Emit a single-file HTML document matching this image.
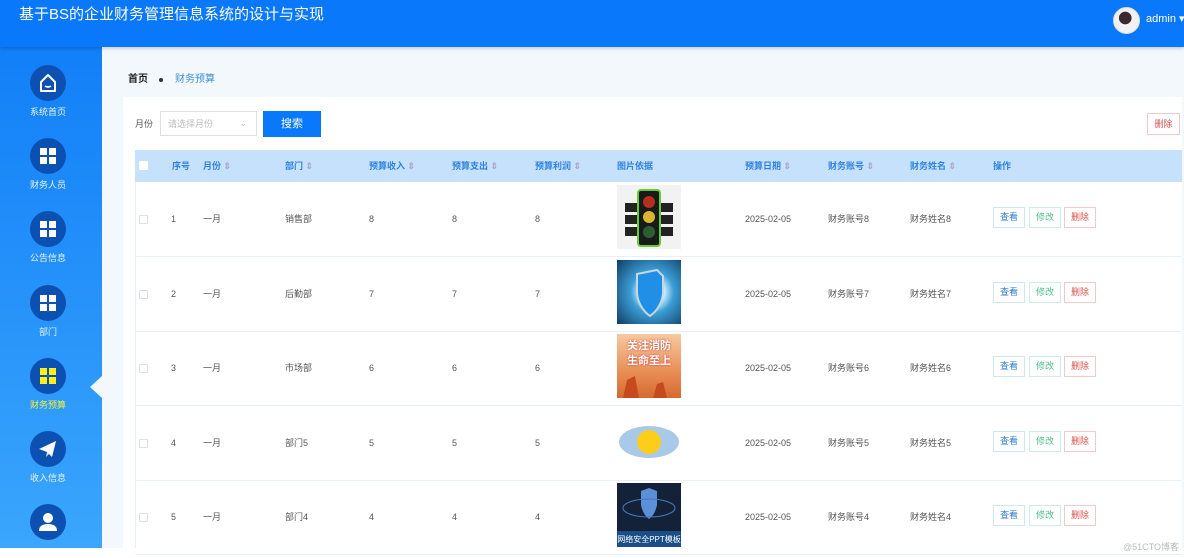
<!DOCTYPE html>
<html><head><meta charset="utf-8">
<style>
*{margin:0;padding:0;box-sizing:border-box}
body{width:1184px;height:558px;overflow:hidden;background:#fff;font-family:"Liberation Sans","Noto Sans CJK SC",sans-serif;position:relative}
.abs{position:absolute}
.hdr{left:0;top:0;width:1184px;height:47px;background:#0a78fb;box-shadow:0 2px 3px rgba(0,0,0,.15);z-index:2}
.title{left:19px;top:5px;color:#fff;font-size:15px;line-height:20px}
.side{left:0;top:47px;width:102px;height:501px;background:linear-gradient(#127ff8,#3aa6fc)}
.main{left:102px;top:47px;width:1082px;height:501px;background:#f3f8fd}
.circ{position:absolute;left:30px;width:36px;height:36px;border-radius:50%;background:#0c50b2}
.grid{position:absolute;left:10px;top:10px;width:16px;height:16px}
.grid i{position:absolute;width:7px;height:7px;background:#fff}
.lbl{position:absolute;left:0;width:96px;text-align:center;color:#e6f1ff;font-size:9px;line-height:12px}
.panel{left:123px;top:97px;width:1059px;height:451px;background:#fff}
.th{top:150px;height:32px;left:135px;width:1047px;background:#c6e1fb}
.h{position:absolute;top:160px;font-size:9px;line-height:12px;color:#2e82e0;font-weight:bold;white-space:nowrap}
.c{position:absolute;font-size:9px;line-height:12px;color:#555;white-space:nowrap}
.row{position:absolute;left:135px;width:1047px;height:1px;background:#e8eff6}
.cb{position:absolute;left:139px;width:9px;height:9px;border:1px solid #dcdfe6;background:#fff;border-radius:1px}
.btn{position:absolute;height:21px;width:32px;border:1px solid;font-size:9px;text-align:center;line-height:19px;background:#fff}
.img{position:absolute;left:617px;width:64px;height:64px;overflow:hidden}
</style></head><body>
<div class="abs hdr"></div>
<div class="abs title" style="z-index:3">基于BS的企业财务管理信息系统的设计与实现</div>
<div class="abs" style="z-index:3;left:1113px;top:7px;width:27px;height:27px;border-radius:50%;background:radial-gradient(circle at 45% 40%,#3a2a30 0 30%,#f2f0f0 32%);border:1px solid #ddd"></div>
<div class="abs" style="z-index:3;left:1146px;top:13px;color:#fff;font-size:11px;line-height:13px;white-space:nowrap">admin ▾</div>
<div class="abs side"></div>
<div class="abs main"></div>
<div class="abs" style="left:90px;top:376px;width:0;height:0;border-top:11px solid transparent;border-bottom:11px solid transparent;border-right:12px solid #f3f8fd"></div>

<div class="circ" style="top:65px"><svg width="36" height="36" viewBox="0 0 36 36"><path d="M11 17 L18 10 L25 17 V26 H11 Z" fill="none" stroke="#fff" stroke-width="2" stroke-linejoin="round"/><path d="M15 21 Q18 23 21 21" fill="none" stroke="#fff" stroke-width="1.6"/></svg></div>
<div class="lbl" style="top:106px">系统首页</div>
<div class="circ" style="top:138px"><div class="grid"><i style="left:0;top:0"></i><i style="left:9px;top:0"></i><i style="left:0;top:9px"></i><i style="left:9px;top:9px"></i></div></div>
<div class="lbl" style="top:179px">财务人员</div>
<div class="circ" style="top:211px"><div class="grid"><i style="left:0;top:0"></i><i style="left:9px;top:0"></i><i style="left:0;top:9px"></i><i style="left:9px;top:9px"></i></div></div>
<div class="lbl" style="top:252px">公告信息</div>
<div class="circ" style="top:285px"><div class="grid"><i style="left:0;top:0"></i><i style="left:9px;top:0"></i><i style="left:0;top:9px"></i><i style="left:9px;top:9px"></i></div></div>
<div class="lbl" style="top:326px">部门</div>
<div class="circ" style="top:358px"><div class="grid"><i style="left:0;top:0;background:#ffef1a"></i><i style="left:9px;top:0;background:#ffef1a"></i><i style="left:0;top:9px;background:#ffef1a"></i><i style="left:9px;top:9px;background:#ffef1a"></i></div></div>
<div class="lbl" style="top:399px;color:#f3ef3a">财务预算</div>
<div class="circ" style="top:431px"><svg width="36" height="36" viewBox="0 0 36 36"><path d="M9 18 L26 10 L22 26 L17 21 Z" fill="#fff"/><path d="M17 21 L16 26 L19 23" fill="#dfe9ff"/></svg></div>
<div class="lbl" style="top:472px">收入信息</div>
<div class="circ" style="top:504px"><svg width="36" height="36" viewBox="0 0 36 36"><circle cx="18" cy="14" r="5" fill="#fff"/><path d="M9 27 Q9 20 18 20 Q27 20 27 27 Z" fill="#fff"/></svg></div>

<div class="abs" style="left:128px;top:73px;font-size:10px;line-height:13px;color:#222;font-weight:bold">首页</div>
<div class="abs" style="left:159px;top:78px;width:4px;height:4px;border-radius:50%;background:#333"></div>
<div class="abs" style="left:175px;top:73px;font-size:10px;line-height:13px;color:#3e8fd8">财务预算</div>

<div class="abs panel"></div>
<div class="abs" style="left:135px;top:118px;font-size:9px;line-height:12px;color:#555">月份</div>
<div class="abs" style="left:160px;top:111px;width:97px;height:25px;border:1px solid #dcdfe6;background:#fff;font-size:9px;line-height:12px;color:#bbb;padding:6px 0 0 7px">请选择月份<span style="position:absolute;right:9px;top:5px;color:#bbb">⌄</span></div>
<div class="abs" style="left:263px;top:111px;width:58px;height:26px;background:#0a78fb;color:#fff;font-size:11px;text-align:center;line-height:26px">搜索</div>
<div class="abs" style="left:1147px;top:113px;width:33px;height:22px;border:1px solid #f0c9c9;color:#d9534f;font-size:9px;text-align:center;line-height:20px;background:#fff">删除</div>

<div class="abs th"></div>
<div class="cb" style="top:161px;border-color:#fff"></div>
<div class="h" style="left:172px">序号</div>
<div class="h" style="left:203px">月份 <span style="color:#aac">⇕</span></div>
<div class="h" style="left:285px">部门 <span style="color:#aac">⇕</span></div>
<div class="h" style="left:369px">预算收入 <span style="color:#aac">⇕</span></div>
<div class="h" style="left:452px">预算支出 <span style="color:#aac">⇕</span></div>
<div class="h" style="left:535px">预算利润 <span style="color:#aac">⇕</span></div>
<div class="h" style="left:617px">图片依据</div>
<div class="h" style="left:745px">预算日期 <span style="color:#aac">⇕</span></div>
<div class="h" style="left:828px">财务账号 <span style="color:#aac">⇕</span></div>
<div class="h" style="left:910px">财务姓名 <span style="color:#aac">⇕</span></div>
<div class="h" style="left:993px">操作</div>
<div class="abs" style="left:135px;top:182px;width:1px;height:366px;background:#e8eff6"></div>

<div id="rows"></div>
<script>
var d=[["1","销售部","8"],["2","后勤部","7"],["3","市场部","6"],["4","部门5","5"],["5","部门4","4"]];
var imgs=[
'<svg width="64" height="64" style="background:#f2f2f2"><rect x="8" y="18" width="48" height="9" fill="#222"/><rect x="8" y="30" width="48" height="9" fill="#222"/><rect x="8" y="42" width="48" height="9" fill="#222"/><rect x="21" y="5" width="22" height="56" rx="3" fill="#1a1a1a" stroke="#6c3" stroke-width="2"/><circle cx="32" cy="17" r="6" fill="#b3301f"/><circle cx="32" cy="32" r="6" fill="#d9b830"/><circle cx="32" cy="47" r="6" fill="#2d5e32"/></svg>',
'<div style="width:64px;height:64px;background:radial-gradient(circle at 55% 50%,#cbeeff 0 25%,#3c9ed6 45%,#0e3d63)"><svg width="64" height="64"><path d="M20 14 L40 10 L46 16 V34 Q44 48 33 56 Q22 48 20 34 Z" fill="#1f8fe8" stroke="#c9d6e0" stroke-width="2"/></svg></div>',
'<div style="position:relative;width:64px;height:64px;background:linear-gradient(#f7c9a0,#e88d55 60%,#d46a30)"><div style="color:#fff;font-size:11px;font-weight:bold;text-align:center;padding-top:5px;line-height:15px;text-shadow:0 0 2px #c33">关注消防<br>生命至上</div><svg width="64" height="30" style="position:absolute;left:0;top:34px"><path d="M6 30 L10 12 L18 8 L22 30 Z M36 30 L40 16 L46 14 L50 30 Z" fill="#c64a1e"/></svg></div>',
'<svg width="64" height="64"><ellipse cx="32" cy="33" rx="30" ry="16" fill="#a9c9e8"/><circle cx="32" cy="33" r="12" fill="#fccd1a"/></svg>',
'<svg width="64" height="64" style="background:#132238"><path d="M24 8 L32 5 L40 8 V22 Q38 32 32 36 Q26 32 24 22 Z" fill="#5b8fd8"/><ellipse cx="32" cy="25" rx="26" ry="9" fill="none" stroke="#4b78b8"/><rect x="0" y="48" width="64" height="16" fill="#1b4d86"/><text x="32" y="59" font-size="8" fill="#fff" text-anchor="middle" font-family="Liberation Sans,Noto Sans CJK SC,sans-serif">网络安全PPT模板</text></svg>'];
var h='';
for(var i=0;i<5;i++){var t=Math.round(182+i*74.5),m=t+31;
h+='<div class="row" style="top:'+(t+74)+'px"></div>';
h+='<div class="cb" style="top:'+(m+2)+'px"></div>';
h+='<div class="c" style="left:171px;top:'+m+'px">'+d[i][0]+'</div>';
h+='<div class="c" style="left:203px;top:'+m+'px">一月</div>';
h+='<div class="c" style="left:285px;top:'+m+'px">'+d[i][1]+'</div>';
h+='<div class="c" style="left:369px;top:'+m+'px">'+d[i][2]+'</div>';
h+='<div class="c" style="left:452px;top:'+m+'px">'+d[i][2]+'</div>';
h+='<div class="c" style="left:535px;top:'+m+'px">'+d[i][2]+'</div>';
h+='<div class="img" style="top:'+(t+3)+'px">'+imgs[i]+'</div>';
h+='<div class="c" style="left:745px;top:'+m+'px">2025-02-05</div>';
h+='<div class="c" style="left:828px;top:'+m+'px">财务账号'+d[i][2]+'</div>';
h+='<div class="c" style="left:910px;top:'+m+'px">财务姓名'+d[i][2]+'</div>';
h+='<div class="btn" style="left:993px;top:'+(t+25)+'px;border-color:#cfe6f5;color:#2c7ccc">查看</div>';
h+='<div class="btn" style="left:1029px;top:'+(t+25)+'px;border-color:#cfeee2;color:#4cbb8a">修改</div>';
h+='<div class="btn" style="left:1064px;top:'+(t+25)+'px;border-color:#f0c9c9;color:#d9534f">删除</div>';
}
document.getElementById('rows').innerHTML=h;
</script>
<div class="abs" style="left:1123px;top:541px;font-size:9px;line-height:12px;color:#bbb">@51CTO博客</div>
</body></html>
